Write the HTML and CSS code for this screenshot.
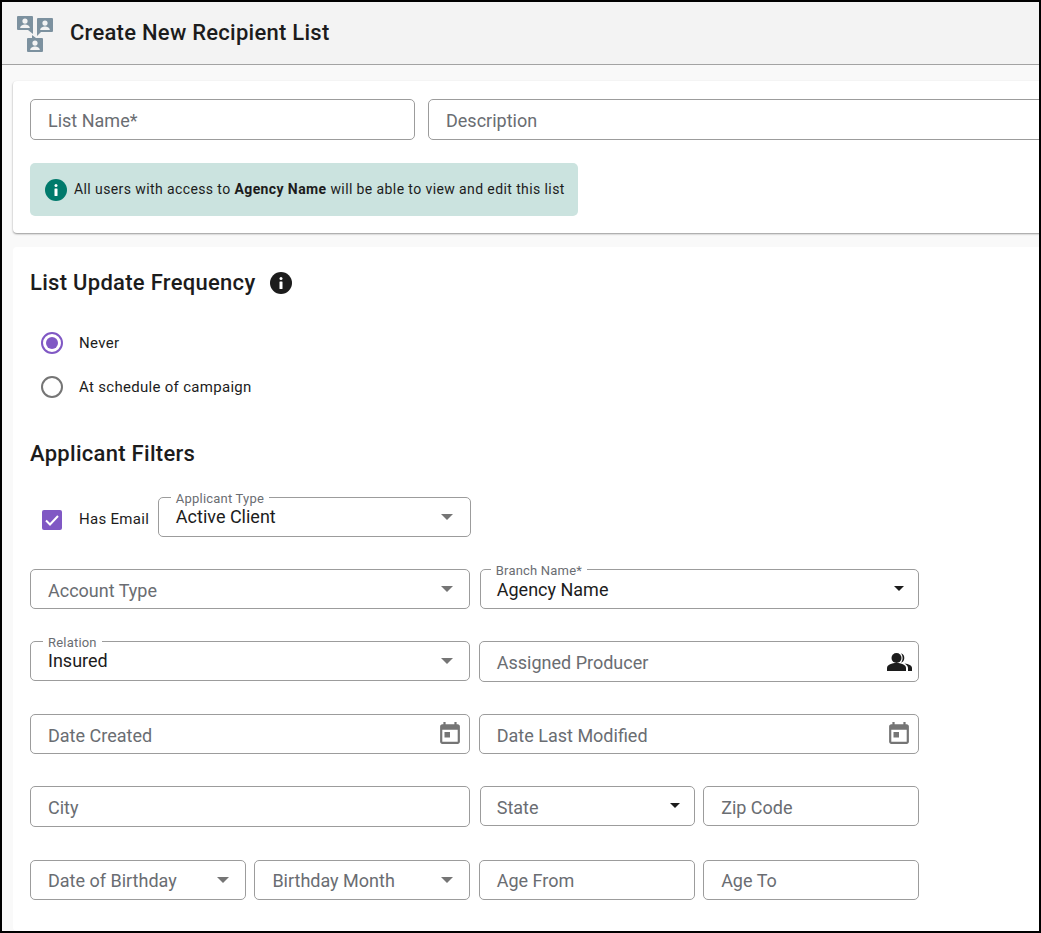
FILE: index.html
```html
<!DOCTYPE html>
<html lang="en">
<head>
<meta charset="utf-8">
<title>Create New Recipient List</title>
<link rel="stylesheet" href="styles.css">
</head>
<body>
<div class="frame">
  <header class="topbar">
    <svg class="logo" viewBox="17 14 36 37" width="36" height="37">
      <path class="logo-fill" fill-rule="evenodd" d="M18 15h14a1 1 0 0 1 1 1v17l-5-4H18a1 1 0 0 1-1-1V16a1 1 0 0 1 1-1zM25 17.500a2.600 2.600 0 1 0 0 5.200 2.600 2.600 0 0 0 0-5.200zM20.200 27h9.600c0-2.200-2.700-3.400-4.800-3.400s-4.800 1.200-4.800 3.400z"/>
      <path class="logo-fill" fill-rule="evenodd" d="M38 17h14a1 1 0 0 1 1 1v12a1 1 0 0 1-1 1H41l-4 4V18a1 1 0 0 1 1-1zM45 19.500a2.600 2.600 0 1 0 0 5.200 2.600 2.600 0 0 0 0-5.200zM40.200 29h9.600c0-2.200-2.700-3.400-4.800-3.400s-4.800 1.200-4.800 3.400z"/>
      <path class="logo-fill" fill-rule="evenodd" d="M28 37h4V34l4 3h6a1 1 0 0 1 1 1v12a1 1 0 0 1-1 1H28a1 1 0 0 1-1-1V38a1 1 0 0 1 1-1zM35 39.500a2.600 2.600 0 1 0 0 5.200 2.600 2.600 0 0 0 0-5.200zM30.200 49h9.600c0-2.200-2.700-3.400-4.800-3.400s-4.800 1.200-4.800 3.400z"/>
    </svg>
    <h1 class="title">Create New Recipient List</h1>
  </header>
  <main class="content">
    <section class="card card-top">
      <div class="name-row">
        <div class="field field-name"><span class="ph">List Name*</span></div>
        <div class="field field-desc"><span class="ph">Description</span></div>
      </div>
      <div class="banner">
        <svg class="info" viewBox="0 0 22 22" width="22" height="22"><circle class="info-teal" cx="11" cy="11" r="11"/><rect class="info-mark" x="9.500" y="5" width="3" height="3" rx="1.500"/><rect class="info-mark" x="9.500" y="9.500" width="3" height="7.500" rx=".5"/></svg>
        <p class="banner-text">All users with access to <strong>Agency Name</strong> will be able to view and edit this list</p>
      </div>
    </section>
    <section class="card card-main">
      <div class="freq-head">
        <h2 class="h2">List Update Frequency</h2>
        <svg class="info" viewBox="0 0 22 22" width="22" height="22"><circle class="info-dark" cx="11" cy="11" r="11"/><rect class="info-mark" x="9.500" y="5" width="3" height="3" rx="1.500"/><rect class="info-mark" x="9.500" y="9.500" width="3" height="7.500" rx=".5"/></svg>
      </div>
      <div class="radio-row first"><span class="radio on"></span><span class="opt">Never</span></div>
      <div class="radio-row"><span class="radio"></span><span class="opt">At schedule of campaign</span></div>
      <h2 class="h2 filters">Applicant Filters</h2>
      <div class="email-row">
        <span class="check"><svg viewBox="0 0 20 20" width="20" height="20"><path class="tick" d="M4 10.500l4 4 8-8.500"/></svg></span>
        <span class="opt has-email">Has Email</span>
        <div class="field sel type-field">
          <span class="legend">Applicant Type</span><span class="val">Active Client</span><span class="caret"></span>
        </div>
      </div>
      <div class="grid grid-a">
        <div class="field sel span2 h40"><span class="ph low">Account Type</span><span class="caret"></span></div>
        <div class="field sel span2 h40 nudge"><span class="legend">Branch Name*</span><span class="val low">Agency Name</span><span class="caret dark"></span></div>
      </div>
      <div class="grid grid-b">
        <div class="field sel span2 h40"><span class="legend">Relation</span><span class="val">Insured</span><span class="caret"></span></div>
        <div class="field span2"><span class="ph">Assigned Producer</span>
          <svg class="people" viewBox="0 0 25 18" width="25" height="18"><circle class="ink" cx="9.500" cy="5" r="5"/><path class="ink" d="M0 18v-3c0-3.500 5-5 9.500-5s9.500 1.500 9.500 5v3z"/><path class="ink" d="M14 .3a5 5 0 0 1 0 9.400c1-1.300 1.600-2.900 1.600-4.700S15 1.600 14 .3z"/><path class="ink" d="M17.500 10.500c4 .5 7.500 2 7.500 4.500v3h-4v-3c0-1.800-1.500-3.400-3.500-4.500z"/></svg>
        </div>
      </div>
      <div class="grid grid-c">
        <div class="field span2 h40"><span class="ph low">Date Created</span>
          <svg class="cal" viewBox="3 1 18 20" width="20" height="22"><path class="grey" d="M19 3h-1V1h-2v2H8V1H6v2H5c-1.110 0-1.990.9-1.990 2L3 19c0 1.100.89 2 2 2h14c1.100 0 2-.9 2-2V5c0-1.100-.9-2-2-2zm0 16H5V8h14v11zM7 10h5v5H7z"/></svg>
        </div>
        <div class="field span2 h40"><span class="ph low">Date Last Modified</span>
          <svg class="cal" viewBox="3 1 18 20" width="20" height="22"><path class="grey" d="M19 3h-1V1h-2v2H8V1H6v2H5c-1.110 0-1.990.9-1.990 2L3 19c0 1.100.89 2 2 2h14c1.100 0 2-.9 2-2V5c0-1.100-.9-2-2-2zm0 16H5V8h14v11zM7 10h5v5H7z"/></svg>
        </div>
      </div>
      <div class="grid grid-d">
        <div class="field span2"><span class="ph">City</span></div>
        <div class="field sel h40 nudge"><span class="ph low">State</span><span class="caret dark"></span></div>
        <div class="field h40"><span class="ph low">Zip Code</span></div>
      </div>
      <div class="grid grid-e">
        <div class="field sel h40"><span class="ph">Date of Birthday</span><span class="caret"></span></div>
        <div class="field sel h40"><span class="ph">Birthday Month</span><span class="caret"></span></div>
        <div class="field h40"><span class="ph">Age From</span></div>
        <div class="field h40"><span class="ph">Age To</span></div>
      </div>
    </section>
  </main>
</div>
</body>
</html>
```
FILE: styles.css
```css
* { box-sizing: border-box; }
html, body { margin: 0; padding: 0; }
body { font-family: Roboto, "Liberation Sans", sans-serif; background: #fff; }
.frame {
  width: 1041px; height: 933px; border: 2px solid #000; overflow: hidden;
  background: #f9f9f9; display: flex; flex-direction: column; color: #1c1c1c;
}
.topbar {
  height: 63px; flex: none; background: #f3f3f3; border-bottom: 1px solid #a3a3a3;
  display: flex; align-items: center; padding: 0 0 0 15px;
}
.logo { flex: none; margin-right: 17px; }
.logo-fill { fill: #7c919f; }
.title { margin: 0; font-size: 22px; font-weight: 500; line-height: 28px; letter-spacing: .26px; }
.content { flex: 1; padding: 16px 0 0 11px; display: flex; flex-direction: column; gap: 14px; min-height: 0; }
.card { background: #fff; border-radius: 4px 0 0 4px; margin-right: -2px; padding-left: 17px; }
.card-top { height: 152px; padding-top: 18px; box-shadow: 0 1px 2px rgba(0,0,0,.4); flex: none; }
.card-main { flex: 1; padding-top: 23px; }
.name-row { display: flex; gap: 13px; }
.field {
  position: relative; height: 41px; border: 1px solid #9c9c9c; border-radius: 5px; background: #fff;
  display: flex; align-items: center; padding: 0 17px; min-width: 0;
}
.h40 { height: 40px; }
.field-name { width: 385px; flex: none; }
.field-desc { flex: 1; margin-right: -20px; }
.ph { font-size: 18px; color: #6a6d72; line-height: 24px; white-space: nowrap; padding-top: 2px; }
.ph.low { padding-top: 4px; }
.val { font-size: 18px; color: #1c1c1c; line-height: 24px; white-space: nowrap; }
.val.low { padding-top: 2px; }
.legend {
  position: absolute; top: -7px; left: 12px; padding: 0 5px; background: #fff;
  font-size: 13px; line-height: 15px; color: #6a6d72; letter-spacing: .2px; white-space: nowrap;
}
.caret {
  position: absolute; right: 16px; top: 50%; margin-top: -3px; width: 0; height: 0;
  border-left: 6px solid transparent; border-right: 6px solid transparent; border-top: 6px solid #757575;
}
.caret.dark { right: 14px; border-left-width: 5px; border-right-width: 5px; border-top: 5px solid #1c1c1c; }
.type-field .caret { right: 17px; }
.banner {
  margin-top: 23px; width: 548px; height: 53px; border-radius: 5px; background: #cbe3df;
  display: flex; align-items: center; padding-left: 15px; gap: 7px;
}
.banner-text { margin: 0 0 2px; font-size: 14px; line-height: 20px; letter-spacing: .4px; color: #1c1c1c; white-space: nowrap; }
.banner-text strong { font-weight: 700; }
.info { flex: none; }
.info-teal { fill: #007a6c; }
.info-dark { fill: #1c1c1c; }
.info-mark { fill: #fff; }
.freq-head { display: flex; align-items: center; gap: 15px; height: 26px; }
.h2 { margin: 0; font-size: 22px; font-weight: 500; line-height: 26px; letter-spacing: .29px; }
.radio-row { display: flex; align-items: center; height: 22px; margin-top: 22px; padding-left: 11px; }
.radio-row.first { margin-top: 36px; }
.radio {
  width: 22px; height: 22px; border-radius: 50%; border: 2px solid #757575; background: #fff; flex: none; margin-right: 16px; position: relative;
}
.radio.on { border-color: #8058c4; }
.radio.on::after { content: ""; position: absolute; left: 3px; top: 3px; width: 12px; height: 12px; border-radius: 50%; background: #8058c4; }
.opt { font-size: 15px; line-height: 20px; letter-spacing: .3px; color: #1c1c1c; white-space: nowrap; }
.filters { margin-top: 43px; }
.email-row { display: flex; align-items: center; margin-top: 30px; padding-left: 12px; }
.check { width: 20px; height: 20px; border-radius: 2px; background: #8058c4; flex: none; margin-right: 17px; margin-top: 5px; }
.check svg { display: block; }
.tick { fill: none; stroke: #fff; stroke-width: 2; }
.has-email { margin-top: 4px; }
.type-field { width: 313px; height: 40px; margin-left: 8.700px; flex: none; }
.grid { display: grid; grid-template-columns: repeat(4, 1fr); column-gap: 8.500px; width: 889px; }
.span2 { grid-column: span 2; }
.grid-a { margin-top: 32px; }
.grid-b { margin-top: 32px; }
.grid-c { margin-top: 32px; }
.grid-d { margin-top: 32px; }
.grid-e { margin-top: 33px; }
.nudge { margin-left: 1px; padding-left: 16px; }
.nudge .legend { left: 10px; }
.people { position: absolute; right: 6px; top: 11px; }
.ink { fill: #1c1c1c; }
.cal { position: absolute; right: 9px; top: 7px; }
.grey { fill: #757575; }
```
